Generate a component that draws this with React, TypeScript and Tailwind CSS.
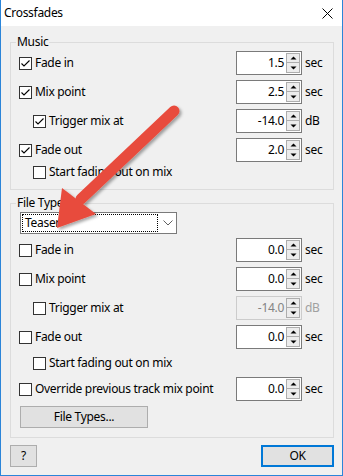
import React from "react";

type RowProps = {
  label: string;
  checked?: boolean;
  indent?: boolean;
  value?: string;
  unit?: string;
  disabled?: boolean;
};

const Checkbox = ({ checked }: { checked?: boolean }) => (
  <span className="w-[13px] h-[13px] border border-[#333333] bg-white flex items-center justify-center shrink-0">
    {checked && (
      <svg width="11" height="11" viewBox="0 0 11 11">
        <path d="M1.5 5.5 L4 8 L9.5 2.5" fill="none" stroke="#000" strokeWidth="1.1" />
      </svg>
    )}
  </span>
);

const SpinBox = ({ value, disabled }: { value: string; disabled?: boolean }) => (
  <div
    className={
      disabled
        ? "w-[66px] h-[24px] border border-[#cccccc] bg-[#f0f0f0] flex items-center"
        : "w-[66px] h-[24px] border border-[#7a7a7a] bg-white flex items-center"
    }
  >
    <span className={disabled ? "flex-1 text-right pr-[2px] text-[#838383]" : "flex-1 text-right pr-[2px]"}>
      {value}
    </span>
    <div className="flex flex-col w-[14px] h-[20px] mr-[1px]">
      <span className="h-[10px] border border-[#adadad] bg-[#ececec] flex items-center justify-center">
        <svg width="7" height="4" viewBox="0 0 7 4">
          <path d="M0.5 3.5 L3.5 0.5 L6.5 3.5 Z" fill="#000" />
        </svg>
      </span>
      <span className="h-[10px] border border-t-0 border-[#adadad] bg-[#ececec] flex items-center justify-center">
        <svg width="7" height="4" viewBox="0 0 7 4">
          <path d="M0.5 0.5 L3.5 3.5 L6.5 0.5 Z" fill="#000" />
        </svg>
      </span>
    </div>
  </div>
);

const Row = ({ label, checked, indent, value, unit, disabled }: RowProps) => (
  <div className={value ? "flex items-center h-[24px]" : "flex items-center h-[16px]"}>
    <div className={indent ? "flex items-center flex-1 pl-[14px]" : "flex items-center flex-1"}>
      <Checkbox checked={checked} />
      <span className="ml-[3px]">{label}</span>
    </div>
    {value && (
      <>
        <SpinBox value={value} disabled={disabled} />
        <span className={disabled ? "w-[31px] pl-[3px] text-[#a0a0a0]" : "w-[31px] pl-[3px]"}>{unit}</span>
      </>
    )}
  </div>
);

export default function App() {
  return (
    <div className="relative w-[343px] h-[476px] bg-[#f0f0f0] border-l border-r border-b border-[#2b85d9] text-[12px] leading-[16px] tracking-[-0.3px] text-black font-['Segoe_UI','Noto_Sans',sans-serif] select-none">
      <div className="h-[26px] bg-white flex items-center">
        <span className="pl-[3px]">Crossfades</span>
        <svg className="ml-auto mr-[9px]" width="11" height="11" viewBox="0 0 11 11">
          <path d="M0.5 0.5 L10.5 10.5 M10.5 0.5 L0.5 10.5" stroke="#000" strokeWidth="1" />
        </svg>
      </div>

      <div className="pt-[8px]">
        <fieldset className="ml-[9px] w-[324px] border border-[#dcdcdc] pl-[8px] pt-[1px] pb-[9px]">
          <legend className="-ml-[3px] px-[1px] h-[16px]">Music</legend>
          <div className="flex flex-col gap-[5px]">
            <Row label="Fade in" checked value="1.5" unit="sec" />
            <Row label="Mix point" checked value="2.5" unit="sec" />
            <Row label="Trigger mix at" checked indent value="-14.0" unit="dB" />
            <Row label="Fade out" checked value="2.0" unit="sec" />
          </div>
          <div className="mt-[2px]">
            <Row label="Start fading out on mix" indent />
          </div>
        </fieldset>

        <fieldset className="mt-[5px] ml-[9px] w-[324px] border border-[#dcdcdc] pl-[8px] pt-[1px] pb-[9px]">
          <legend className="-ml-[3px] px-[1px] h-[16px]">File Type</legend>
          <div className="ml-[1px] w-[157px] h-[22px] border border-[#7a7a7a] bg-white flex items-center">
            <div className="ml-[1px] w-[136px] h-[18px] border border-dotted border-black flex items-center">
              <span className="pl-[2px]">Teaser</span>
            </div>
            <svg className="ml-[5px]" width="10" height="6" viewBox="0 0 10 6">
              <path d="M0.5 0.5 L5 5 L9.5 0.5" fill="none" stroke="#606060" strokeWidth="1" />
            </svg>
          </div>
          <div className="mt-[4px] flex flex-col gap-[5px]">
            <Row label="Fade in" value="0.0" unit="sec" />
            <Row label="Mix point" value="0.0" unit="sec" />
            <Row label="Trigger mix at" indent value="-14.0" unit="dB" disabled />
            <Row label="Fade out" value="0.0" unit="sec" />
          </div>
          <div className="mt-[6px]">
            <Row label="Start fading out on mix" indent />
          </div>
          <div className="mt-[6px]">
            <Row label="Override previous track mix point" value="0.0" unit="sec" />
          </div>
          <button className="mt-[5px] ml-[1px] w-[128px] h-[22px] border border-[#adadad] bg-[#e1e1e1] flex items-center justify-center">
            File Types...
          </button>
        </fieldset>

        <div className="mt-[7px] flex items-center justify-between pl-[9px] pr-[8px]">
          <button className="w-[27px] h-[22px] border border-[#adadad] bg-[#e1e1e1] flex items-center justify-center">
            ?
          </button>
          <button className="w-[73px] h-[22px] border-2 border-[#0078d7] bg-[#e1e1e1] flex items-center justify-center">
            OK
          </button>
        </div>
      </div>

      <svg className="absolute top-0 left-0 pointer-events-none" width="343" height="476" viewBox="0 0 343 476">
        <defs>
          <filter id="arrowShadow" x="-20%" y="-20%" width="140%" height="140%">
            <feDropShadow dx="2" dy="2" stdDeviation="1.5" floodColor="#000" floodOpacity="0.35" />
          </filter>
        </defs>
        <g filter="url(#arrowShadow)">
          <line x1="173" y1="111" x2="80" y2="199" stroke="#e84c3d" strokeWidth="11" strokeLinecap="round" />
          <polygon points="61,188 95,214 56,228" fill="#e84c3d" />
        </g>
      </svg>
    </div>
  );
}
